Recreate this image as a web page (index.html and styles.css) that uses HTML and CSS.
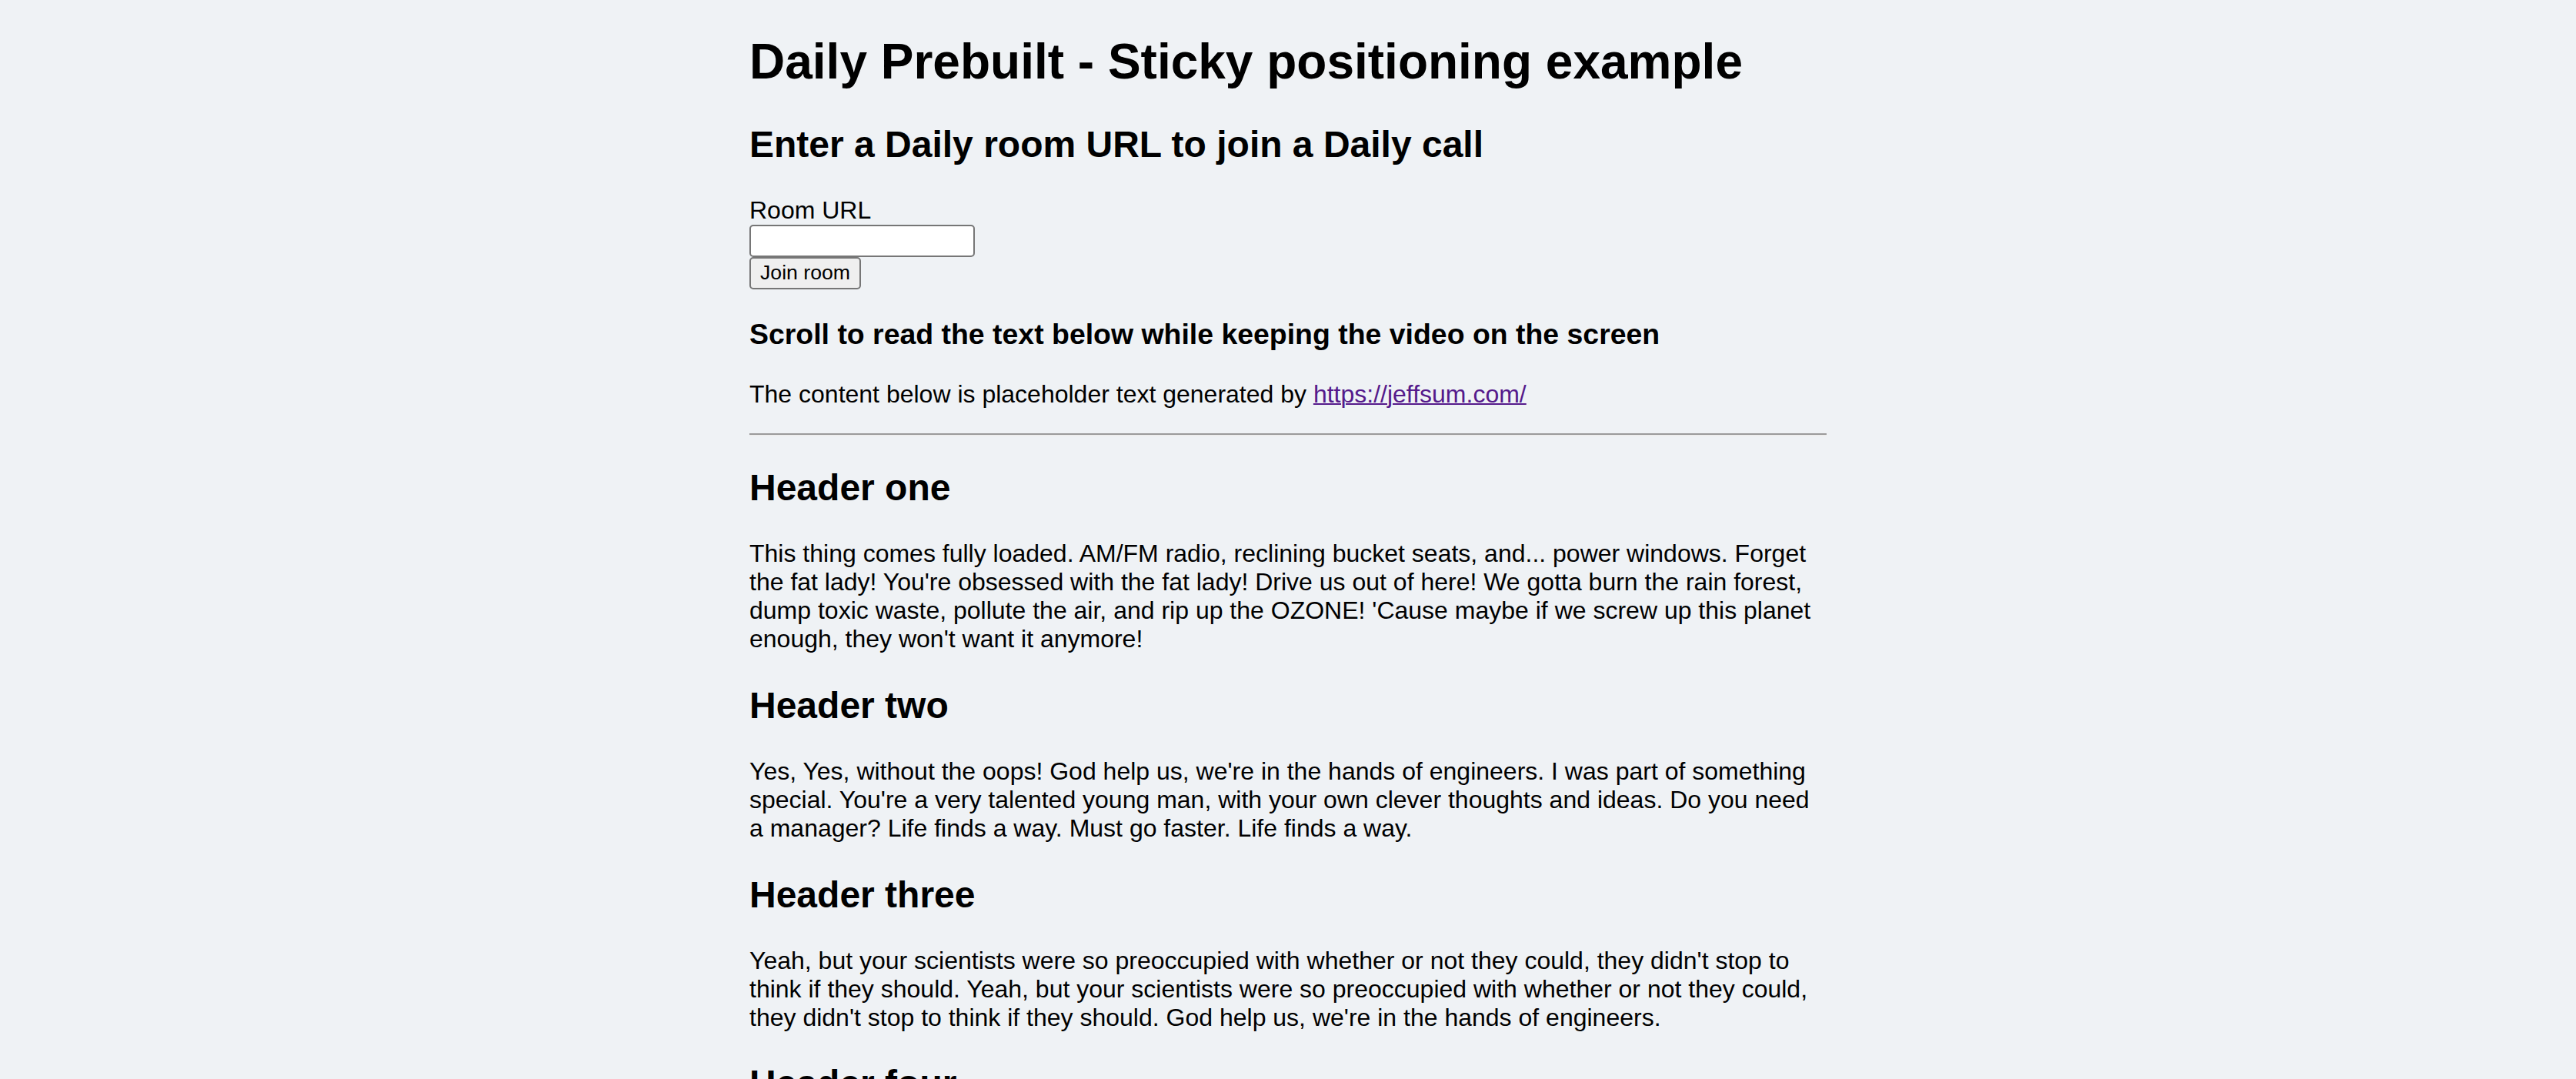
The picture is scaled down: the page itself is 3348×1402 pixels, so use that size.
FILE: index.html
```html
<!DOCTYPE html>
<html lang="en">
<head>
<meta charset="utf-8">
<title>Daily Prebuilt - Sticky positioning example</title>
<link rel="stylesheet" href="styles.css">
</head>
<body>
<main class="page">
  <h1 class="title">Daily Prebuilt - Sticky positioning example</h1>
  <h2 class="subtitle">Enter a Daily room URL to join a Daily call</h2>
  <form class="join-form">
    <label class="field-label" for="room-url">Room URL</label>
    <input class="field-input" id="room-url" type="text">
    <button class="join-button" type="button">Join room</button>
  </form>
  <h3 class="note">Scroll to read the text below while keeping the video on the screen</h3>
  <p class="text">The content below is placeholder text generated by <a class="link" href="#">https://jeffsum.com/</a></p>
  <hr class="rule">
  <section class="article">
    <h2 class="section-title">Header one</h2>
    <p class="text">This thing comes fully loaded. AM/FM radio, reclining bucket seats, and... power windows. Forget the fat lady! You're obsessed with the fat lady! Drive us out of here! We gotta burn the rain forest, dump toxic waste, pollute the air, and rip up the OZONE! 'Cause maybe if we screw up this planet enough, they won't want it anymore!</p>
    <h2 class="section-title">Header two</h2>
    <p class="text">Yes, Yes, without the oops! God help us, we're in the hands of engineers. I was part of something special. You're a very talented young man, with your own clever thoughts and ideas. Do you need a manager? Life finds a way. Must go faster. Life finds a way.</p>
    <h2 class="section-title">Header three</h2>
    <p class="text">Yeah, but your scientists were so preoccupied with whether or not they could, they didn't stop to think if they should. Yeah, but your scientists were so preoccupied with whether or not they could, they didn't stop to think if they should. God help us, we're in the hands of engineers.</p>
    <h2 class="section-title">Header four</h2>
    <p class="text">Must go faster... go, go, go, go, go! Eventually, you do plan to have dinosaurs on your dinosaur tour, right? Hey, you know how I'm, like, always trying to save the planet? Here's my chance.</p>
  </section>
</main>
</body>
</html>
```
FILE: styles.css
```css
html {
  background: #eff2f5;
}

body {
  margin: 0 16px 16px;
  background: #eff2f5;
  color: #000;
  font-family: "Liberation Sans", Arial, sans-serif;
  font-size: 32px;
}

.page {
  max-width: 1400px;
  margin: 0 auto;
  padding-top: 1px;
}

.title {
  font-size: 64px;
  font-weight: bold;
  margin: 42px 0 42.88px;
}

.subtitle,
.section-title {
  font-size: 48px;
  font-weight: bold;
  margin: 39.84px 0;
}

.join-form {
  display: flex;
  flex-direction: column;
  align-items: flex-start;
  margin: 0;
}

.field-label {
  display: block;
  line-height: normal;
}

.field-input {
  box-sizing: border-box;
  width: 293px;
  height: 42px;
  margin: 0;
  padding: 2px 4px;
  border: 2px solid #767676;
  border-radius: 5px;
  background: #fff;
  font-family: "Liberation Sans", Arial, sans-serif;
  font-size: 26.67px;
}

.join-button {
  box-sizing: border-box;
  height: 42px;
  margin: 0;
  padding: 2px 12px;
  border: 2px solid #767676;
  border-radius: 5px;
  background: #efefef;
  color: #000;
  font-family: "Liberation Sans", Arial, sans-serif;
  font-size: 26.67px;
}

.note {
  font-size: 37.44px;
  font-weight: bold;
  margin: 37.44px 0;
}

.text {
  margin: 32px 0;
  line-height: normal;
}

.link {
  color: #551a8b;
  text-decoration: underline;
  text-decoration-thickness: 2px;
}

.rule {
  margin: 16px 0;
  height: 0;
  border: none;
  border-top: 2px solid #9a9a9a;
  border-bottom: 2px solid #eeeeee;
}

.article {
  margin: 0;
}
```
